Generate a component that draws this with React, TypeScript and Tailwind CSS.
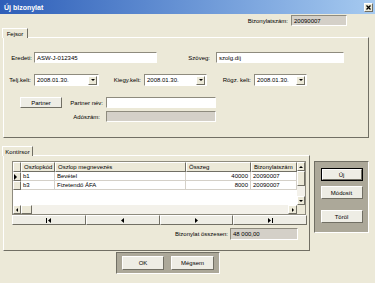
import React from "react";

const raised =
  "border border-t-white border-l-white border-r-[#716F64] border-b-[#716F64]";
const sunken =
  "border border-t-[#8E8B7E] border-l-[#8E8B7E] border-r-white border-b-white";

function Arrow({ dir, size = 4 }: { dir: "up" | "down" | "left" | "right"; size?: number }) {
  const pts: Record<string, string> = {
    up: "0,4 4,0 8,4",
    down: "0,0 8,0 4,4",
    left: "4,0 4,8 0,4",
    right: "0,0 0,8 4,4",
  };
  const vertical = dir === "up" || dir === "down";
  return (
    <svg
      width={vertical ? size : size / 2}
      height={vertical ? size / 2 : size}
      viewBox={vertical ? "0 0 8 4" : "0 0 4 8"}
    >
      <polygon points={pts[dir]} fill="#000" />
    </svg>
  );
}

function NavIcon({ kind }: { kind: "first" | "prev" | "next" | "last" }) {
  return (
    <svg width="6" height="5" viewBox="0 0 6 5">
      {kind === "first" && (
        <>
          <rect x="0" y="0" width="1" height="5" fill="#000" />
          <polygon points="5,0 5,5 2,2.5" fill="#000" />
        </>
      )}
      {kind === "prev" && <polygon points="4,0 4,5 1,2.5" fill="#000" />}
      {kind === "next" && <polygon points="2,0 2,5 5,2.5" fill="#000" />}
      {kind === "last" && (
        <>
          <polygon points="1,0 1,5 4,2.5" fill="#000" />
          <rect x="5" y="0" width="1" height="5" fill="#000" />
        </>
      )}
    </svg>
  );
}

function TextBox({ value, w, gray }: { value?: string; w: string; gray?: boolean }) {
  return (
    <div
      className={`${w} h-[11px] ${sunken} ${gray ? "bg-[#D4D0C8]" : "bg-white"} flex items-center pl-[2px]`}
    >
      {value}
    </div>
  );
}

function Combo({ value, w }: { value: string; w: string }) {
  return (
    <div className={`${w} h-[12px] ${sunken} bg-white flex items-center pl-[2px] pr-[1px]`}>
      <span className="grow">{value}</span>
      <div className={`w-[9px] h-[9px] ${raised} bg-[#ECE9D8] flex items-center justify-center`}>
        <Arrow dir="down" />
      </div>
    </div>
  );
}

function Label({ text, w, pr = "pr-[3px]" }: { text: string; w: string; pr?: string }) {
  return <div className={`${w} text-right ${pr} shrink-0`}>{text}</div>;
}

function Button({ text, w, h, isDefault }: { text: string; w: string; h: string; isDefault?: boolean }) {
  return (
    <div className={`${w} ${h} ${isDefault ? "border border-black" : ""}`}>
      <div
        className={`w-full h-full ${raised} bg-[#EEEDE5] flex items-center justify-center`}
      >
        {text}
      </div>
    </div>
  );
}

function Tab({ text, w }: { text: string; w: string }) {
  return (
    <div
      className={`${w} h-[10px] ml-[2px] border border-b-0 border-t-white border-l-white border-r-[#716F64] bg-[#ECE9D8] flex items-center justify-center relative z-10`}
    >
      {text}
    </div>
  );
}

const rows = [
  { kod: "b1", nev: "Bevétel", osszeg: "40000", szam: "20090007", current: true },
  { kod: "b3", nev: "Fizetendő ÁFA", osszeg: "8000", szam: "20090007", current: false },
];

function Grid() {
  const cell = "border-r border-b border-[#D4D0C8] flex items-center px-[2px] h-[9px]";
  const head = `${raised} bg-[#ECE9D8] flex items-center px-[2px] h-[10px]`;
  return (
    <div className="ml-[8px] mt-[5px] w-[294px] h-[54px] bg-white border border-[#8E8B7E] flex flex-col">
      <div className="flex grow">
        <div className="flex flex-col w-[284px]">
          <div className="flex">
            <div className={`${head} w-[8px]`} />
            <div className={`${head} w-[34px]`}>Oszlopkód</div>
            <div className={`${head} w-[131px]`}>Oszlop megnevezés</div>
            <div className={`${head} w-[65px]`}>Összeg</div>
            <div className={`${head} w-[46px]`}>Bizonylatszám</div>
          </div>
          {rows.map((r) => (
            <div key={r.kod} className="flex">
              <div className={`${raised} bg-[#ECE9D8] w-[8px] h-[9px] flex items-center`}>
                {r.current && <Arrow dir="right" size={6} />}
              </div>
              <div className={`${cell} w-[34px]`}>{r.kod}</div>
              <div className={`${cell} w-[131px]`}>{r.nev}</div>
              <div className={`${cell} w-[65px] justify-end`}>{r.osszeg}</div>
              <div className={`${cell} w-[46px]`}>{r.szam}</div>
            </div>
          ))}
        </div>
        <div className="w-[9px] flex flex-col bg-[#F3F1EA]">
          <div className={`h-[9px] ${raised} bg-[#ECE9D8] flex items-center justify-center`}>
            <Arrow dir="up" />
          </div>
          <div className={`h-[15px] ${raised} bg-[#ECE9D8]`} />
          <div className="grow" />
          <div className={`h-[9px] ${raised} bg-[#ECE9D8] flex items-center justify-center`}>
            <Arrow dir="down" />
          </div>
        </div>
      </div>
      <div className="flex h-[9px]">
        <div className={`w-[8px] ${raised} bg-[#ECE9D8] flex items-center justify-center`}>
          <Arrow dir="left" />
        </div>
        <div className={`w-[11px] ${raised} bg-[#ECE9D8]`} />
        <div className="grow bg-[#F3F1EA]" />
        <div className={`w-[9px] ${raised} bg-[#ECE9D8] flex items-center justify-center`}>
          <Arrow dir="right" />
        </div>
        <div className="w-[8px] bg-[#ECE9D8]" />
      </div>
    </div>
  );
}

export default function App() {
  return (
    <div className="w-[375px] h-[283px] overflow-hidden bg-[#ECE9D8] font-['Liberation_Sans',Arial,sans-serif] text-[6px] leading-none text-black">
      {/* title bar */}
      <div className="h-[14px] bg-gradient-to-r from-[#2E5EB8] to-[#A6CAF0] flex items-center pl-[4px] pr-[2px]">
        <span className="grow text-white font-bold text-[7px]">Új bizonylat</span>
        <div className={`w-[9px] h-[9px] ${raised} bg-[#ECE9D8] flex items-center justify-center`}>
          <svg width="5" height="5" viewBox="0 0 5 5">
            <path d="M0.5 0.5 L4.5 4.5 M4.5 0.5 L0.5 4.5" stroke="#000" strokeWidth="1.3" />
          </svg>
        </div>
      </div>

      {/* document number */}
      <div className="flex items-center justify-end h-[11px] mt-[1px] pr-[28px]">
        <span className="mr-[3px]">Bizonylatszám:</span>
        <div className={`w-[56px] h-[11px] ${sunken} bg-[#D4D0C8] flex items-center pl-[2px]`}>
          20090007
        </div>
      </div>

      {/* Fejsor */}
      <div className="mt-[2px]">
        <Tab text="Fejsor" w="w-[26px]" />
        <div className={`mx-[3px] -mt-[1px] w-[366px] h-[101px] ${raised}`}>
          <div className="flex items-center mt-[14px]">
            <Label text="Eredeti:" w="w-[30px]" pr="pr-[2px]" />
            <TextBox value="ASW-J-012345" w="w-[123px]" />
            <Label text="Szöveg:" w="w-[59px]" pr="pr-[6px]" />
            <TextBox value="szolg.díj" w="w-[128px]" />
          </div>
          <div className="flex items-center mt-[11px]">
            <Label text="Telj.kelt:" w="w-[30px]" />
            <Combo value="2008.01.30." w="w-[65px]" />
            <Label text="Kiegy.kelt:" w="w-[45px]" />
            <Combo value="2008.01.30." w="w-[63px]" />
            <Label text="Rögz. kelt:" w="w-[47px]" />
            <Combo value="2008.01.30." w="w-[53px]" />
          </div>
          <div className="flex mt-[11px]">
            <div className="ml-[16px] w-[42px]">
              <Button text="Partner" w="w-[42px]" h="h-[11px]" />
            </div>
            <div className="flex flex-col gap-[3px]">
              <div className="flex items-center">
                <Label text="Partner név:" w="w-[44px]" />
                <TextBox w="w-[110px]" />
              </div>
              <div className="flex items-center">
                <Label text="Adószám:" w="w-[44px]" pr="pr-[6px]" />
                <TextBox w="w-[110px]" gray />
              </div>
            </div>
          </div>
        </div>
      </div>

      {/* Kontírsor + side buttons */}
      <div className="flex mt-[8px]">
        <div>
          <Tab text="Kontírsor" w="w-[31px]" />
          <div className={`ml-[3px] -mt-[1px] w-[307px] h-[96px] ${raised}`}>
            <Grid />
            <div className="ml-[8px] flex w-[295px] h-[10px]">
              {(["first", "prev", "next", "last"] as const).map((k) => (
                <div key={k} className={`flex-1 ${raised} bg-[#EEEDE5] flex items-center justify-center`}>
                  <NavIcon kind={k} />
                </div>
              ))}
            </div>
            <div className="flex items-center justify-end mt-[3px] pr-[11px]">
              <span className="mr-[2px]">Bizonylat összesen:</span>
              <div className={`w-[68px] h-[12px] ${sunken} bg-[#D4D0C8] flex items-center pl-[2px]`}>
                48 000,00
              </div>
            </div>
          </div>
        </div>
        <div className="ml-[4px] mt-[15px] w-[55px] h-[72px] bg-[#ACA899] border border-t-[#716F64] border-l-[#716F64] border-r-white border-b-white flex flex-col items-center pt-[6px]">
          <Button text="Új" w="w-[42px]" h="h-[13px]" isDefault />
          <div className="mt-[5px]">
            <Button text="Módosít" w="w-[42px]" h="h-[13px]" />
          </div>
          <div className="mt-[11px]">
            <Button text="Töröl" w="w-[42px]" h="h-[13px]" />
          </div>
        </div>
      </div>

      {/* OK / Cancel */}
      <div className="ml-[116px] mt-[1px] w-[104px] h-[22px] bg-[#ACA899] border border-t-[#716F64] border-l-[#716F64] border-r-white border-b-white flex items-center pl-[5px] gap-[7px]">
        <Button text="OK" w="w-[42px]" h="h-[14px]" />
        <Button text="Mégsem" w="w-[43px]" h="h-[14px]" />
      </div>
    </div>
  );
}
